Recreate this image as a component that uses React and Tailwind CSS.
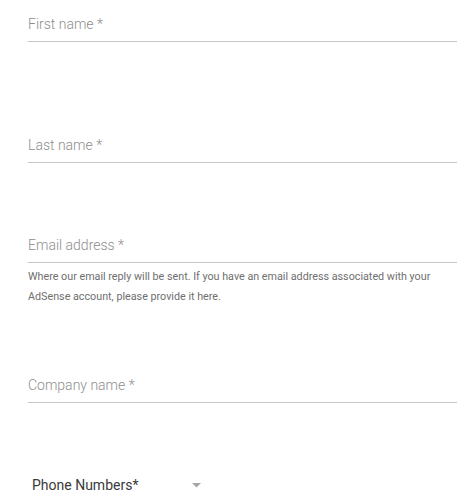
import React from "react";

const Field = ({ label, className = "" }) => (
  <div className={`border-b border-[#c6c6c6] pb-[7px] ${className}`}>
    <div className="text-[14px] leading-[20px] font-light text-[#8e8e8e]">{label}</div>
  </div>
);

const App = () => {
  return (
    <div
      className="w-[476px] h-[500px] bg-white overflow-hidden"
      style={{ fontFamily: "Roboto, 'Noto Sans', sans-serif" }}
    >
      <div className="ml-[28px] w-[429px] pt-[14px]">
        <Field label="First name *" />
        <Field label="Last name *" className="mt-[93px]" />
        <Field label="Email address *" className="mt-[72px]" />
        <p className="mt-[4px] text-[10.75px] leading-[20px] text-[#6f6f6f]">
          Where our email reply will be sent. If you have an email address
          associated with your AdSense account, please provide it here.
        </p>
        <Field label="Company name *" className="mt-[68px]" />

        {/* Phone selector */}
        <div className="mt-[72px] flex items-center pl-[4px]">
          <span className="w-[160px] text-[14px] leading-[20px] text-[#3a3a3a]">
            Phone Numbers*
          </span>
          <svg width="9" height="5" viewBox="0 0 9 5">
            <path d="M0 0 L9 0 L4.5 4.5 Z" fill="#a6a6a6" />
          </svg>
        </div>
      </div>
    </div>
  );
};

export default App;
